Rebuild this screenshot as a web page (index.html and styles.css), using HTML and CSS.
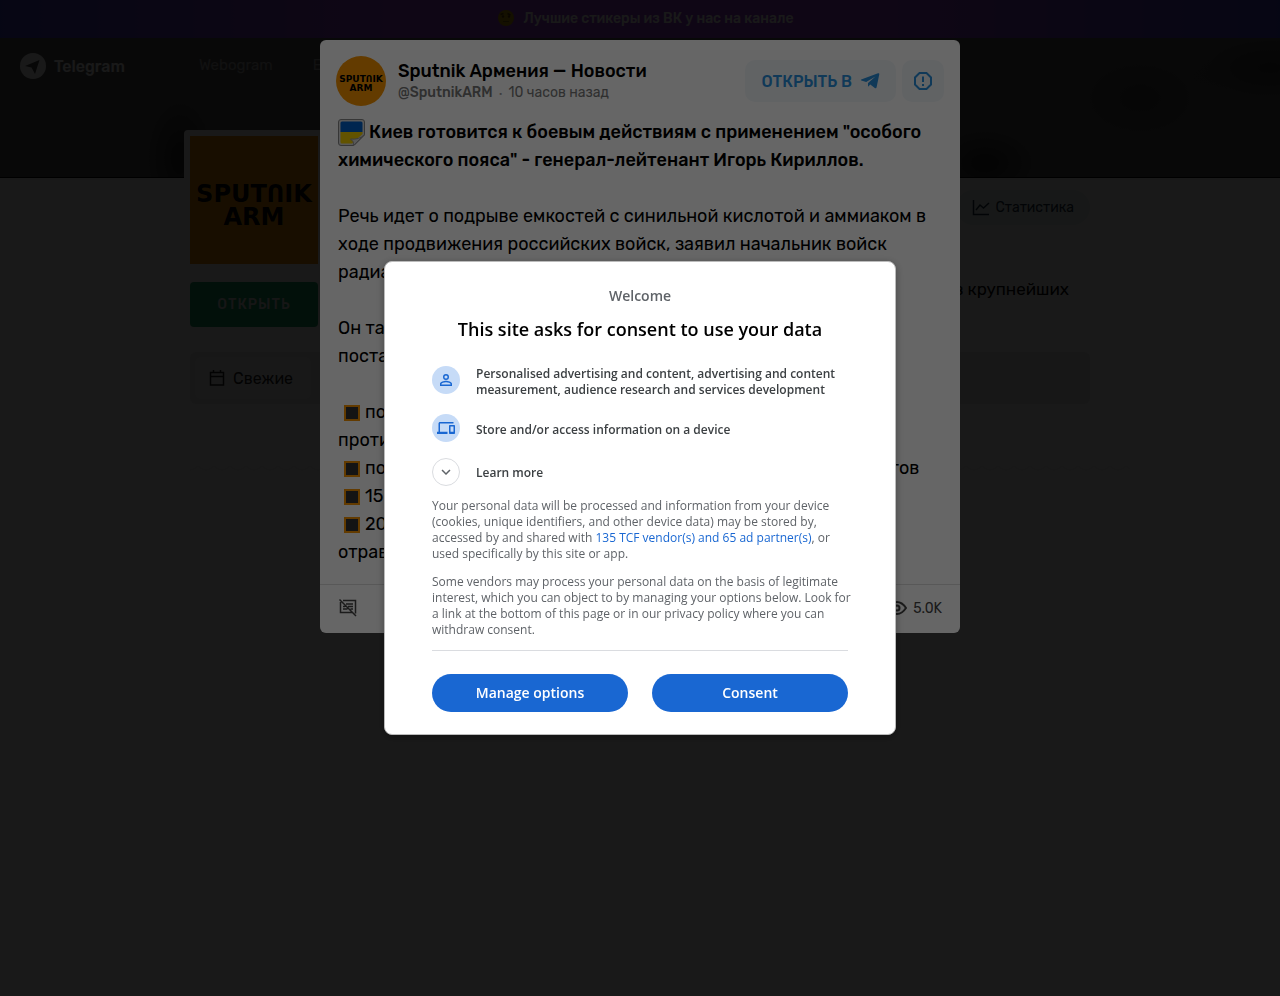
FILE: index.html
```html
<!DOCTYPE html>
<html lang="ru">
<head>
    <meta charset="UTF-8">
    <meta name="viewport" content="width=device-width, initial-scale=1.0">
    <title>Sputnik Армения — Новости</title>
    <link rel="stylesheet" href="styles.css">
</head>
<body>
    <a class="promo" href="#">
        <svg class="promo-icon" viewBox="0 0 18 18" aria-hidden="true">
            <circle cx="9" cy="9" r="8" fill="#c8a000"/>
            <path d="M3.5 5.5l3-1M10.500 4.500l3 1.500" stroke="#664400" stroke-width="1.400"/>
            <circle cx="6" cy="7.500" r="1.200" fill="#664400"/>
            <circle cx="12" cy="7.500" r="1.200" fill="#664400"/>
            <path d="M6 12.500h6" stroke="#886600"/>
        </svg>
        <span>Лучшие стикеры из ВК у нас на канале</span>
    </a>

    <header class="cover">
        <a class="brand" href="#">
            <svg class="brand-icon" viewBox="0 0 26 26" aria-hidden="true">
                <circle cx="13" cy="13" r="13" fill="#fff"/>
                <path d="M5 13 19.500 7 15 21 11.500 14.500z" fill="#4a4a4a"/>
            </svg>
            Telegram
        </a>
        <nav class="menu">
            <a href="#">Webogram</a>
            <a href="#">Each</a>
        </nav>
    </header>

    <main class="channel">
        <div class="channel-top">
            <div class="side">
                <svg class="channel-logo" viewBox="0 0 128 128" role="img" aria-label="Sputnik ARM">
                    <rect width="128" height="128" fill="#f79400"/>
                    <text x="64" y="66" text-anchor="middle" class="logo-text">SPUTՈIK</text>
                    <text x="64" y="89" text-anchor="middle" class="logo-text">ARM</text>
                </svg>
                <button class="open-channel">ОТКРЫТЬ</button>
            </div>
            <div class="about">
                <a class="stats" href="#">
                    <svg viewBox="0 0 18 18" aria-hidden="true">
                        <path d="M1.500 1v14.500H17M4 11l4-5 3.500 3L17 4" fill="none" stroke="currentColor" stroke-width="1.500"/>
                    </svg>
                    Статистика
                </a>
                <p>в крупнейших</p>
            </div>
        </div>
        <div class="tabs">
            <button class="tab">
                <svg viewBox="0 0 16 18" aria-hidden="true">
                    <path d="M1.500 3.500h13v12.500h-13zM1.500 7.500h13M4.500 1v3M11.500 1v3" fill="none" stroke="currentColor" stroke-width="1.500"/>
                </svg>
                Свежие
            </button>
        </div>
        <svg class="wave" aria-hidden="true">
            <defs>
                <pattern id="wave" width="16" height="6" patternUnits="userSpaceOnUse">
                    <path d="M0 5Q4 5 8 1Q12 5 16 5" fill="none" stroke="#ececec"/>
                </pattern>
            </defs>
            <rect width="100%" height="6" fill="url(#wave)"/>
        </svg>
    </main>

    <!-- Post popup -->
    <div class="popup">
        <article class="post">
            <header class="post-head">
                <svg class="post-logo" viewBox="0 0 50 50" role="img" aria-label="Sputnik ARM">
                    <circle cx="25" cy="25" r="25" fill="#f79400"/>
                    <text x="25" y="26" text-anchor="middle" class="logo-text-small">SPUTՈIK</text>
                    <text x="25" y="35" text-anchor="middle" class="logo-text-small">ARM</text>
                </svg>
                <div class="post-info">
                    <h2>Sputnik Армения — Новости</h2>
                    <p><b>@SputnikARM</b><span class="dot">•</span>10 часов назад</p>
                </div>
                <button class="open-in">
                    ОТКРЫТЬ В
                    <svg viewBox="0 0 20 18" aria-hidden="true">
                        <path d="M1.200 7.600 18 1.300q1.500-.4 1.300 1L16.600 15.300q-.4 1.500-1.800.7L10.300 12.600 8 14.800V11L15.500 4.500 6.200 10 1.300 8.600Q.3 8.100 1.200 7.600z" fill="currentColor"/>
                    </svg>
                </button>
                <button class="report" aria-label="Пожаловаться">
                    <svg viewBox="0 0 20 20" aria-hidden="true">
                        <path d="M6.500 2h7L18 6.500v7L13.500 18h-7L2 13.500v-7zM10 5.500v5.500M10 13v2" fill="none" stroke="currentColor" stroke-width="2"/>
                    </svg>
                </button>
            </header>
            <div class="post-text">
                <p>
                    <b><svg class="flag" viewBox="0 0 27 27" aria-hidden="true">
                        <path d="M3 .5h21q2.500 0 2.500 2.500v13L16 26.500H3Q.5 26.500.5 24V3Q.5.5 3 .5z" fill="#ddd" stroke="#888"/>
                        <path d="M2.500 4q0-1.500 1.500-1.500h19q1.500 0 1.500 1.500v9h-22z" fill="#0060c8"/>
                        <path d="M2.500 13h22v2L14 24.500H4Q2.500 24.500 2.500 23z" fill="#f5d000"/>
                        <path d="M26.500 15.500 15.500 26.500q1-4-3-6.500 9 1 14-4.500z" fill="#ddd" stroke="#999"/>
                    </svg> Киев готовится к боевым действиям с применением "особого<br>
                    химического пояса" - генерал-лейтенант Игорь Кириллов.</b>
                </p>
                <p>
                    Речь идет о подрыве емкостей с синильной кислотой и аммиаком в<br>
                    ходе продвижения российских войск, заявил начальник войск<br>
                    радиационной, химической и биологической защиты.
                </p>
                <p>
                    Он также сообщил, что Украина запросила у стран Запада<br>
                    поставки средств защиты:
                </p>
                <p>
                    <i class="mark"></i>поставка антидотов и средств<br>
                    противохимической защиты;<br>
                    <i class="mark"></i>поступили сотни тысяч ампул с различными видами антидотов<br>
                    <i class="mark"></i>150 тысяч противогазов;<br>
                    <i class="mark"></i>20 тысяч препаратов против<br>
                    отравляющих веществ.
                </p>
            </div>
            <footer class="post-foot">
                <svg class="no-comments" viewBox="0 0 20 20" aria-hidden="true">
                    <path d="M5 2.500h12.500v13M14 14.500H2.500V4M8 6h7M10 8.500h5M5 8.500h2M5 11h4.500M12.500 11H15M1.500 1.500l16.500 16.500" fill="none" stroke="currentColor" stroke-width="1.500"/>
                </svg>
                <span class="views">
                    <svg viewBox="0 0 20 16" aria-hidden="true">
                        <path d="M1 8Q5 2 10 2T19 8Q15 14 10 14T1 8z" fill="none" stroke="currentColor" stroke-width="2"/>
                        <circle cx="10" cy="8" r="2.500" fill="none" stroke="currentColor" stroke-width="2"/>
                    </svg>
                    5.0K
                </span>
            </footer>
        </article>
    </div>

    <!-- Consent dialog -->
    <div class="consent-overlay">
        <section class="consent" role="dialog" aria-labelledby="consent-title" lang="en">
            <p class="welcome">Welcome</p>
            <h1 id="consent-title">This site asks for consent to use your data</h1>
            <ul class="purposes">
                <li>
                    <span class="round">
                        <svg viewBox="0 0 24 24" aria-hidden="true">
                            <path d="M12 5.900a2.100 2.100 0 110 4.200 2.100 2.100 0 010-4.200m0 9c2.970 0 6.100 1.460 6.100 2.100v1.100H5.900V17c0-.64 3.130-2.100 6.100-2.100M12 4a4 4 0 100 8 4 4 0 000-8zm0 9c-2.670 0-8 1.340-8 4v3h16v-3c0-2.660-5.330-4-8-4z"/>
                        </svg>
                    </span>
                    <span class="purpose">Personalised advertising and content, advertising and content measurement, audience research and services development</span>
                </li>
                <li>
                    <span class="round">
                        <svg viewBox="0 0 24 24" aria-hidden="true">
                            <path d="M4 6h18V4H4c-1.100 0-2 .9-2 2v11H0v3h14v-3H4V6zm19 2h-6c-.55 0-1 .45-1 1v10c0 .55.45 1 1 1h6c.55 0 1-.45 1-1V9c0-.55-.45-1-1-1zm-1 9h-4v-7h4v7z"/>
                        </svg>
                    </span>
                    <span class="purpose">Store and/or access information on a device</span>
                </li>
            </ul>
            <button class="learn">
                <span class="round">
                    <svg viewBox="0 0 24 24" aria-hidden="true">
                        <path d="M16.590 8.590 12 13.170 7.410 8.590 6 10l6 6 6-6z"/>
                    </svg>
                </span>
                Learn more
            </button>
            <div class="details">
                <p>Your personal data will be processed and information from your device (cookies, unique identifiers, and other device data) may be stored by, accessed by and shared with <a href="#">135 TCF vendor(s) and 65 ad partner(s)</a>, or used specifically by this site or app.</p>
                <p>Some vendors may process your personal data on the basis of legitimate interest, which you can object to by managing your options below. Look for a link at the bottom of this page or in our privacy policy where you can withdraw consent.</p>
            </div>
            <div class="actions">
                <button>Manage options</button>
                <button>Consent</button>
            </div>
        </section>
    </div>
</body>
</html>
```

FILE: styles.css
```css
* {
    box-sizing: border-box;
}

body {
    margin: 0;
    background: #fff;
    color: #000;
    font-family: Rubik, Roboto, sans-serif;
    font-size: 16px;
    overflow: hidden;
}

h1, h2, p, ul {
    margin: 0;
    padding: 0;
}

a {
    color: inherit;
    text-decoration: none;
}

button {
    border: none;
    font-family: inherit;
    cursor: pointer;
}

svg {
    flex-shrink: 0;
}

/* Top banner */
.promo {
    display: flex;
    justify-content: center;
    align-items: center;
    gap: 9px;
    height: 38px;
    padding: 0 0 2px 10px;
    background: linear-gradient(90deg, #4646c8, #9646d2 30%, #9646d2 70%, #4646c8);
    color: #fff;
    font-size: 14px;
    font-weight: 500;
}

.promo-icon {
    width: 18px;
    height: 18px;
}

/* Header */
.cover {
    display: flex;
    gap: 74px;
    height: 140px;
    padding: 14px 20px;
    border-bottom: 1px solid #000;
    background:
        radial-gradient(ellipse 40px 70px at 180px 120px, #282828, transparent),
        radial-gradient(ellipse 60px 40px at 985px 125px, #282828, transparent),
        radial-gradient(ellipse 90px 60px at 1140px 60px, #414141, transparent),
        radial-gradient(ellipse 90px 40px at 1270px 30px, #373737, transparent),
        #5a5a5a;
    color: #fff;
}

.brand {
    display: flex;
    align-items: center;
    gap: 8px;
    height: 28px;
    font-weight: 500;
}

.brand-icon {
    width: 26px;
    height: 26px;
}

.menu {
    display: flex;
    gap: 40px;
    line-height: 26px;
    font-size: 15px;
    color: #aaa;
}

/* Channel */
.channel {
    max-width: 900px;
    margin: 0 auto;
}

.channel-top {
    display: flex;
    justify-content: space-between;
}

.side {
    width: 140px;
    margin: -48px 0 0 -6px;
}

.channel-logo {
    display: block;
    width: 140px;
    height: 140px;
    border: 6px solid #fff;
    border-radius: 4px;
}

.logo-text {
    font: bold 24px "DejaVu Sans", sans-serif;
}

.logo-text-small {
    font: bold 9px "DejaVu Sans", sans-serif;
}

.open-channel {
    width: 128px;
    height: 45px;
    margin: 12px 6px 0;
    border-radius: 4px;
    background: #1ea064;
    color: #ddd;
    font-size: 14px;
    font-weight: 500;
    letter-spacing: 1px;
}

.about {
    display: flex;
    flex-direction: column;
    align-items: flex-end;
    padding-top: 12px;
}

.about p {
    margin: 52px 21px 0 0;
    line-height: 24px;
    font-size: 17px;
}

.stats {
    display: flex;
    align-items: center;
    gap: 5px;
    height: 35px;
    padding: 0 16px;
    border-radius: 18px;
    background: #e6f5f0;
    color: #1e3246;
    font-size: 14px;
}

.stats svg {
    width: 18px;
    height: 18px;
}

.tabs {
    margin-top: 25px;
    padding: 5px;
    border-radius: 6px;
    background: #e6e6e6;
}

.tab {
    display: flex;
    align-items: center;
    gap: 8px;
    height: 42px;
    padding: 0 18px 0 14px;
    border-radius: 6px;
    background: #f5f5f5;
    color: #222;
    font-size: 16px;
}

.tab svg {
    width: 16px;
    height: 18px;
}

.wave {
    display: block;
    width: 940px;
    height: 6px;
    margin-top: 61px;
}

/* Post popup */
.popup {
    position: fixed;
    inset: 0;
    padding: 40px 0;
    background: rgba(0, 0, 0, 0.75);
}

.post {
    max-width: 640px;
    margin: 0 auto;
    border-radius: 6px;
    background: #fff;
}

.post-head {
    display: flex;
    align-items: center;
    gap: 6px;
    padding: 16px 16px 12px;
}

.post-logo {
    width: 50px;
    height: 50px;
}

.post-info {
    flex: 1;
    padding-left: 6px;
}

.post-info h2 {
    line-height: 24px;
    font-size: 18px;
    font-weight: 500;
}

.post-info p {
    line-height: 20px;
    font-size: 14px;
    color: #777;
}

.post-info b {
    font-weight: 500;
}

.dot {
    margin: 0 6px;
    font-size: 10px;
    color: #999;
}

.open-in, .report {
    display: flex;
    justify-content: center;
    align-items: center;
    gap: 8px;
    height: 42px;
    border-radius: 10px;
    background: #f3f7fb;
    color: #2890dc;
    font-size: 16px;
    font-weight: 500;
}

.open-in {
    padding: 0 16px;
}

.open-in svg {
    width: 20px;
    height: 18px;
}

.report {
    width: 42px;
    padding: 0;
}

.report svg {
    width: 20px;
    height: 20px;
}

.post-text {
    padding: 0 18px 18px;
    line-height: 28px;
    font-size: 18px;
    white-space: nowrap;
}

.post-text p + p {
    margin-top: 28px;
}

.post-text b {
    font-weight: 500;
}

.flag {
    width: 27px;
    height: 27px;
    vertical-align: -8px;
}

.mark {
    display: inline-block;
    width: 16px;
    height: 16px;
    margin: 0 5px 0 6px;
    border: 2px solid #f79400;
    background: #333;
    vertical-align: -3px;
}

.post-foot {
    display: flex;
    justify-content: space-between;
    align-items: center;
    height: 49px;
    padding: 0 18px 2px;
    border-top: 1px solid #ddd;
    color: #444;
    font-size: 14px;
}

.no-comments {
    width: 20px;
    height: 20px;
}

.views {
    display: flex;
    align-items: center;
    gap: 6px;
}

.views svg {
    width: 20px;
    height: 16px;
}

/* Consent dialog */
.consent-overlay {
    position: fixed;
    inset: 0;
    display: flex;
    justify-content: center;
    align-items: center;
    background: rgba(0, 0, 0, 0.6);
    font-family: "Open Sans", sans-serif;
}

.consent {
    width: 40%;
    min-width: 512px;
    padding: 24px 47px 22px;
    border: 1px solid #bbb;
    border-radius: 8px;
    background: #fff;
    box-shadow: 0 2px 8px rgba(0, 0, 0, 0.3);
    color: #3c4043;
    font-size: 12px;
    line-height: 16px;
}

.welcome {
    line-height: 20px;
    font-size: 14px;
    font-weight: 600;
    text-align: center;
    color: #5f6368;
}

.consent h1 {
    margin-top: 10px;
    line-height: 26px;
    font-size: 18px;
    font-weight: 600;
    text-align: center;
    color: #000;
}

.purposes {
    margin: 24px 0 12px;
    list-style: none;
    font-weight: 600;
}

.purposes li, .learn {
    display: flex;
    align-items: center;
    gap: 16px;
}

.purposes li {
    align-items: flex-start;
    min-height: 32px;
}

.purposes li + li {
    margin-top: 16px;
}

.purpose {
    align-self: center;
}

.round {
    display: flex;
    justify-content: center;
    align-items: center;
    flex-shrink: 0;
    width: 28px;
    height: 28px;
    border-radius: 50%;
    background: #c6dbf7;
}

.round svg {
    width: 18px;
    height: 18px;
    fill: #1967d2;
}

.learn {
    padding: 0;
    background: none;
    color: #3c4043;
    font-size: 12px;
    font-weight: 600;
}

.learn .round {
    border: 1px solid #dadce0;
    background: #fff;
}

.learn svg {
    fill: #5f6368;
}

.details {
    margin-top: 12px;
    padding-bottom: 12px;
    border-bottom: 1px solid #dadce0;
    color: #5f6368;
}

.details p {
    margin-right: -8px;
}

.details p + p {
    margin-top: 12px;
}

.details a {
    color: #1967d2;
}

.actions {
    display: flex;
    gap: 24px;
    margin-top: 23px;
}

.actions button {
    flex: 1;
    height: 38px;
    padding: 0 0 2px;
    border-radius: 19px;
    background: #1967d2;
    color: #fff;
    font-size: 14px;
    font-weight: 600;
}
```
